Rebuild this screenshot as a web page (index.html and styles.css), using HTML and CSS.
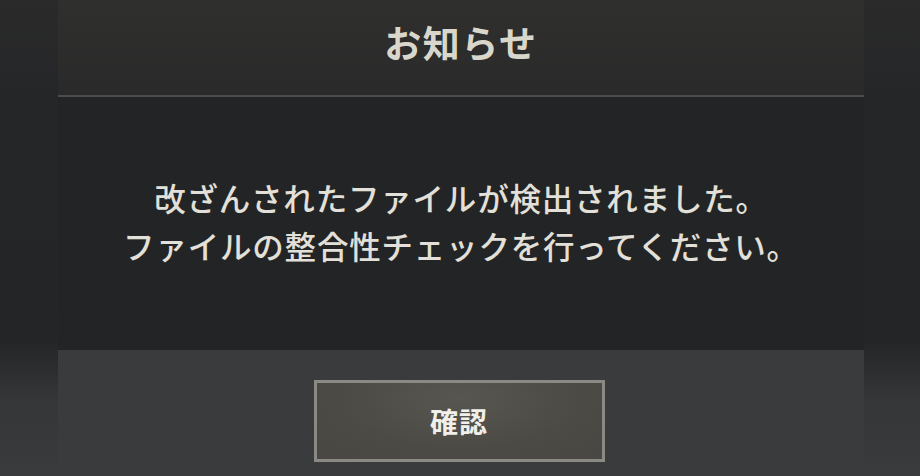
FILE: index.html
```html
<!DOCTYPE html>
<html lang="ja">
<head>
<meta charset="utf-8">
<link rel="stylesheet" href="styles.css">
</head>
<body>
<div class="screen">
  <div class="dialog">
    <div class="header"><h1 class="title">お知らせ</h1></div>
    <div class="content">
      <p class="message">改ざんされたファイルが検出されました。<br>ファイルの整合性チェックを行ってください。</p>
    </div>
    <div class="footer">
      <button class="btn">確認</button>
    </div>
  </div>
</div>
</body>
</html>
```
FILE: styles.css
```css
html, body {
  margin: 0;
  padding: 0;
  width: 920px;
  height: 476px;
  overflow: hidden;
}
body {
  font-family: "Noto Sans CJK JP", "Noto Sans", sans-serif;
  background: linear-gradient(to bottom, #2a2a2a 0px, #252628 100px, #242527 340px, #353637 400px, #3a3b3c 476px);
}
.screen {
  display: flex;
  padding-left: 58px;
  height: 476px;
}
.dialog {
  width: 806px;
  display: flex;
  flex-direction: column;
}
.header {
  height: 95px;
  background: linear-gradient(to bottom, #2f2f2e, #2a2a2a);
  border-bottom: 2px solid #4b4c4d;
  display: flex;
  align-items: center;
  justify-content: center;
}
.title {
  margin: 0;
  margin-top: -12px;
  font-size: 37px;
  font-weight: 700;
  color: #d9d7cc;
  letter-spacing: 1.5px;
}
.content {
  height: 253px;
  background: #232426;
  display: flex;
  align-items: center;
  justify-content: center;
}
.message {
  margin: 0;
  margin-top: -6px;
  font-size: 31.5px;
  line-height: 48px;
  text-align: center;
  color: #e2e0d8;
  font-weight: 500;
  letter-spacing: 0.8px;
}
.footer {
  flex: 1;
  background: #3a3b3d;
  display: flex;
  justify-content: center;
  padding-top: 30px;
}
.btn {
  width: 291px;
  height: 82px;
  box-sizing: border-box;
  border: 3px solid #8a8984;
  background: radial-gradient(ellipse at 50% 20%, #57564f 0%, #4b4a45 60%, #484743 100%);
  color: #f0efea;
  font-family: "Noto Sans CJK JP", "Noto Sans", sans-serif;
  font-size: 28px;
  font-weight: 700;
  letter-spacing: 1px;
  padding: 0;
  margin-left: -4px;
}
```
